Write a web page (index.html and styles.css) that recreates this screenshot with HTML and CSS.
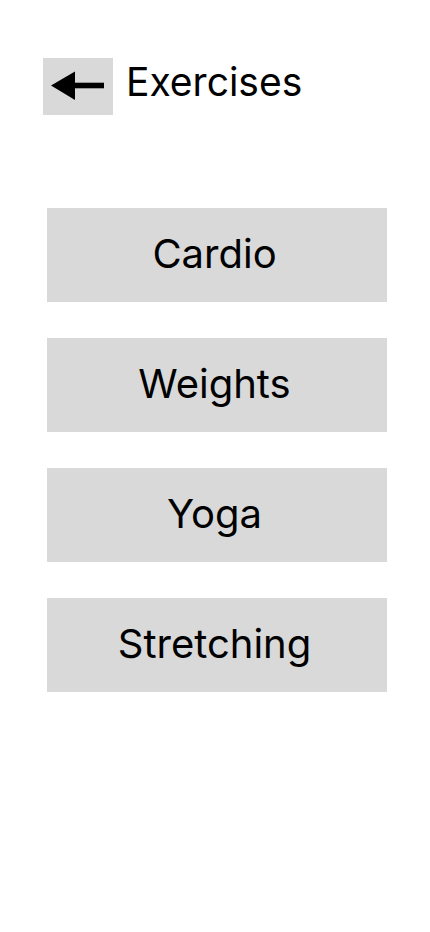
FILE: index.html
```
<!DOCTYPE html>
<html>
<head>
<meta charset="utf-8">
<link rel="stylesheet" href="styles.css">
</head>
<body>
<div class="page">
  <header class="header">
    <button class="back" aria-label="Back">
      <svg width="70" height="57" viewBox="0 0 70 57">
        <polygon points="8,27.5 32,13.5 32,42" fill="#000"/>
        <rect x="31" y="24.7" width="30" height="5.6" fill="#000"/>
      </svg>
    </button>
    <h1 class="title">Exercises</h1>
  </header>
  <nav class="list">
    <button class="item">Cardio</button>
    <button class="item">Weights</button>
    <button class="item">Yoga</button>
    <button class="item">Stretching</button>
  </nav>
</div>
</body>
</html>
```
FILE: styles.css
```
html, body {
  margin: 0;
  padding: 0;
  background: #fff;
}
.page {
  font-family: Inter, "Noto Sans", sans-serif;
  color: #000;
  padding: 58px 43px 0 43px;
}
.header {
  display: flex;
  align-items: center;
  gap: 13px;
  height: 57px;
}
.back {
  width: 70px;
  height: 57px;
  padding: 0;
  border: none;
  background: #d9d9d9;
  display: flex;
  cursor: pointer;
}
.title {
  margin: 0;
  font-size: 39px;
  font-weight: 400;
  line-height: 57px;
  position: relative;
  top: -5px;
}
.list {
  display: flex;
  flex-direction: column;
  gap: 36px;
  margin-top: 93px;
  padding-left: 4px;
}
.item {
  width: 340px;
  height: 94px;
  border: none;
  background: #d9d9d9;
  font-family: Inter, "Noto Sans", sans-serif;
  font-size: 40px;
  color: #000;
  padding: 0 5px 4px 0;
  cursor: pointer;
}
```
